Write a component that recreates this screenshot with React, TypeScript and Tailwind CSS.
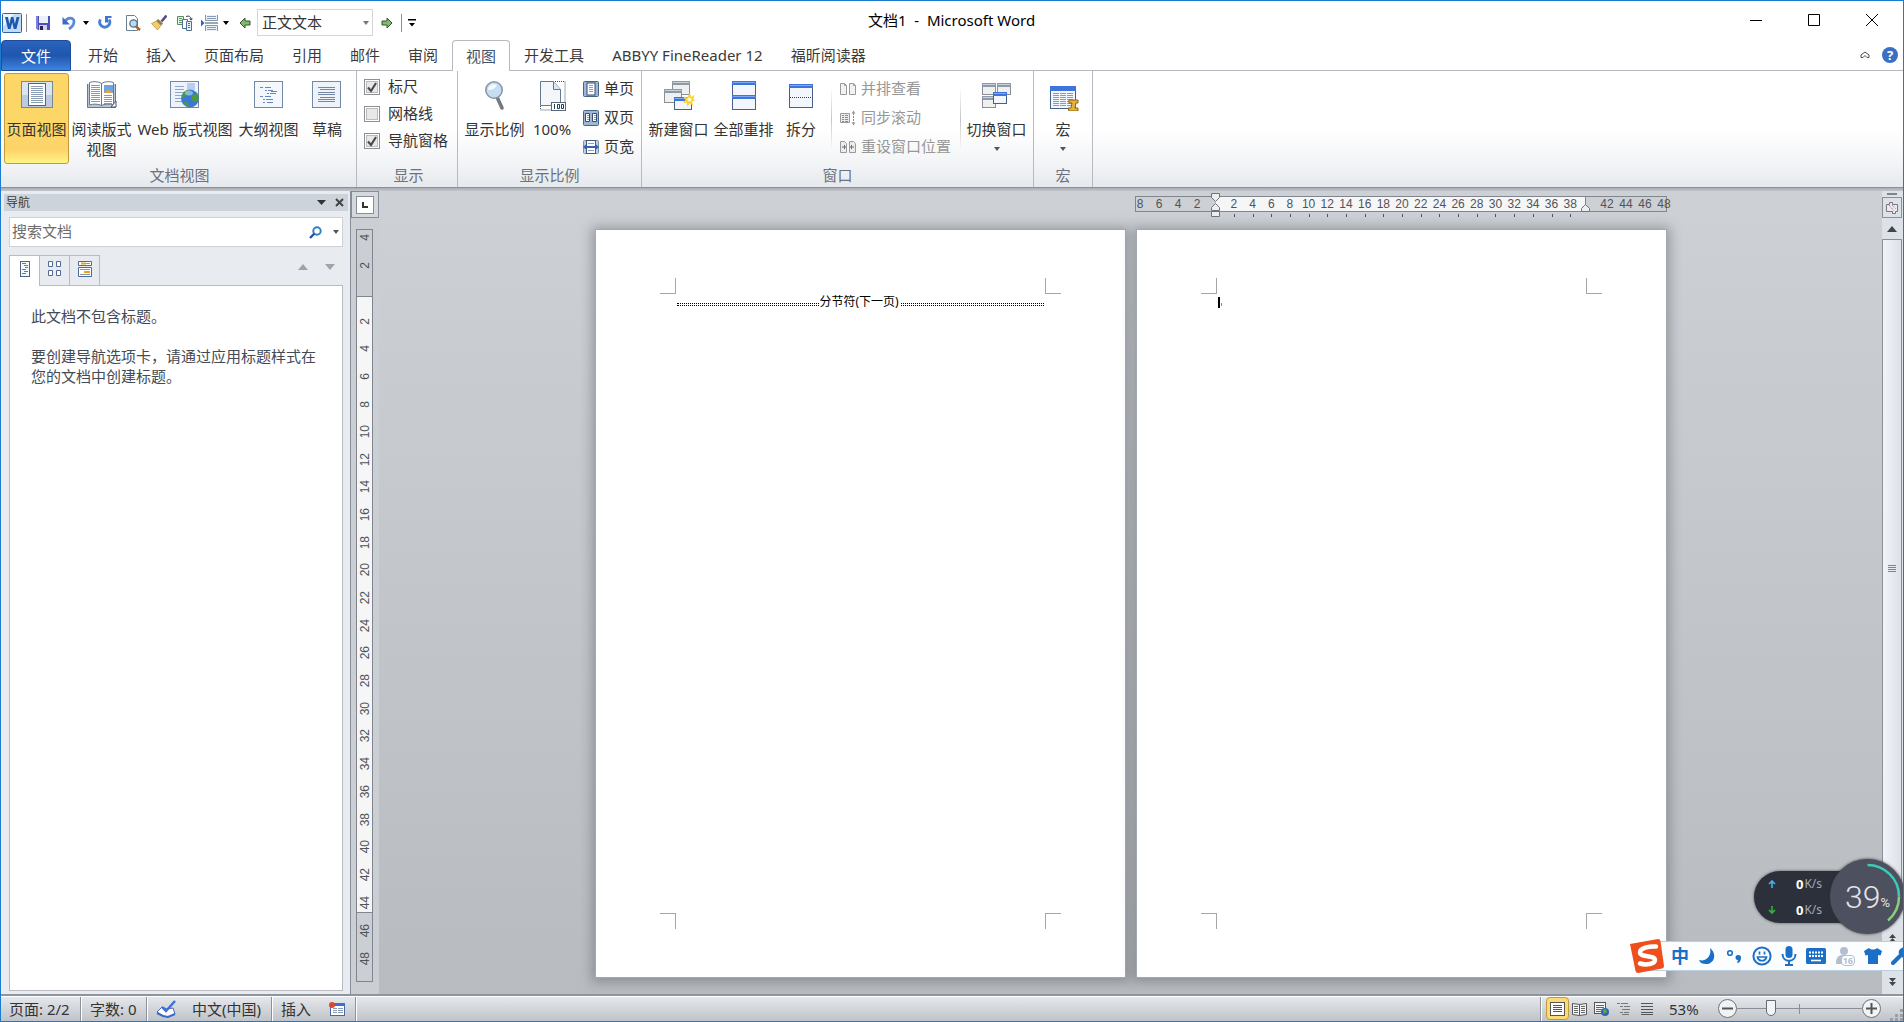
import React, { ReactNode } from "react";
import { clsx } from "clsx";

type IconProps = { className?: string };

const FONT = "font-['Noto_Sans','Noto_Sans_CJK_SC',sans-serif]";

/* ---------- small shared pieces ---------- */

function Caret({ className = "text-black" }: IconProps) {
  return (
    <svg viewBox="0 0 6 4" className={clsx("w-1.5 h-1 shrink-0", className)}>
      <path d="M0 0h6L3 4z" fill="currentColor" />
    </svg>
  );
}

function Lines({ x, y, w, n, gap = 3, color = "#8b9bb3" }: { x: number; y: number; w: number; n: number; gap?: number; color?: string }) {
  return (
    <>
      {Array.from({ length: n }, (_, i) => (
        <rect key={i} x={x} y={y + i * gap} width={w} height="1" fill={color} />
      ))}
    </>
  );
}

/** Small window with a coloured title strip. */
function MiniWindow({ x, y, w, h, blue = true }: { x: number; y: number; w: number; h: number; blue?: boolean }) {
  return (
    <g>
      <rect x={x + 0.5} y={y + 0.5} width={w - 1} height={h - 1} fill={blue ? "#f3f7fd" : "#f0f0f0"} stroke={blue ? "#466087" : "#8a8f96"} />
      <rect x={x} y={y} width={w} height="4" fill={blue ? "#3e74dc" : "#8f9aa8"} />
      <rect x={x + 1} y={y + 1} width={w - 2} height="1" fill={blue ? "#7fa9f5" : "#c8d0da"} />
    </g>
  );
}

/* ---------- quick access icons ---------- */

function WordLogo() {
  return (
    <svg viewBox="0 0 20 20" className="size-5 shrink-0">
      <rect x="0.5" y="0.5" width="19" height="19" rx="1" fill="#c3dcf6" stroke="#2a62a8" />
      <path d="M1 1h11L1 14z" fill="#fff" opacity=".7" />
      <path d="M3 4h3l1.4 7L9 4h2.4l1.5 7L14.600 4H17.500L14.400 16h-2.600L10.200 9.500 8.500 16H6z" fill="#1c59ae" />
    </svg>
  );
}

function SaveIcon() {
  return (
    <svg viewBox="0 0 16 16" className="size-4">
      <path d="M1 1h14v14H3l-2-2z" fill="#4d50b8" />
      <path d="M1 1h2v14l-2-2z" fill="#7d80dc" />
      <rect x="4" y="1" width="9" height="7" fill="#eaf1fb" />
      <rect x="4" y="10" width="8" height="5" fill="#cfd3e6" />
      <rect x="5" y="11" width="3" height="4" fill="#23264f" />
    </svg>
  );
}

function UndoIcon() {
  return (
    <svg viewBox="0 0 16 16" className="size-4">
      <path d="M4 7c2-5 9-5 9-.5 0 3-2 5.500-5 7.500" fill="none" stroke="#5b8ad8" strokeWidth="2.800" />
      <path d="M1.500 2v7.500H9z" fill="#3d6cc2" />
    </svg>
  );
}

function RedoIcon() {
  return (
    <svg viewBox="0 0 16 16" className="size-4">
      <path d="M3.500 4.500a5 5 0 1 0 8.500 0" fill="none" stroke="#4a7fd8" strokeWidth="2.800" />
      <path d="M8 1h6.500v2H11v4.500H8z" fill="#3f75d2" />
    </svg>
  );
}

function PreviewIcon() {
  return (
    <svg viewBox="0 0 16 16" className="size-4">
      <path d="M1.500 .5h8l3 3v12h-11z" fill="#fff" stroke="#6f7f92" />
      <circle cx="8.500" cy="8.500" r="3.700" fill="#b8d9f2" stroke="#55718f" strokeWidth="1.300" />
      <path d="M11 11.500l4 3.500" stroke="#a5652a" strokeWidth="2.400" />
    </svg>
  );
}

function BrushIcon() {
  return (
    <svg viewBox="0 0 16 16" className="size-4">
      <path d="M15.500 .5l-5 6" stroke="#5d4b83" strokeWidth="2.600" />
      <path d="M7 4l5 4.500-2 2L5 6z" fill="#8b7a52" />
      <path d="M5.500 6L10 10.500 6.500 15 .5 8.500z" fill="#f2cd69" stroke="#b88a2c" strokeWidth=".7" />
    </svg>
  );
}

function PagesSwapIcon() {
  return (
    <svg viewBox="0 0 16 16" className="size-4">
      <path d="M.5 1.500h6v8h-6z" fill="#e3f1df" stroke="#5d8a5d" />
      <Lines x={2} y={3} w={3} n={3} gap={2} color="#5d9a5d" />
      <path d="M5.500 4.500h5v9h-5z" fill="#fff" stroke="#4d7391" />
      <path d="M9.500 6.500h5v9h-5z" fill="#e7f0f9" stroke="#4d7391" />
      <Lines x={11} y={8} w={2} n={3} gap={2} color="#4d7391" />
      <path d="M9 1.500c3-1 5 0 5 3" fill="none" stroke="#2d4257" />
      <path d="M12 3.500h4l-2 2z" fill="#2d4257" />
    </svg>
  );
}

function BreakIcon() {
  return (
    <svg viewBox="0 0 18 16" className="w-[18px] h-4">
      <path d="M0 4.500v7L3.500 8z" fill="#2f64c8" />
      <path d="M4.500 0v5.500h12V0M4.500 16v-5.500h12V16" fill="#edf2f9" stroke="#8095ae" />
      <Lines x={6} y={1} w={9} n={2} gap={2} />
      <Lines x={6} y={12} w={9} n={2} gap={2} />
      <path d="M4 8h13" stroke="#3a4d66" />
    </svg>
  );
}

function GreenArrow({ flip = false }: { flip?: boolean }) {
  return (
    <svg viewBox="0 0 12 12" className={clsx("size-3 shrink-0", flip && "-scale-x-100")}>
      <path d="M1 6l5-5v3h5v4H6v3z" fill="#7fb972" stroke="#33562f" />
    </svg>
  );
}

/* ---------- ribbon icons ---------- */

function PageViewIcon() {
  return (
    <svg viewBox="0 0 32 32" className="size-8">
      <rect x="0.500" y="2.500" width="31" height="26" fill="#dbe5f2" stroke="#7c8796" />
      <rect x="1" y="16" width="30" height="12" fill="#bccbdf" />
      <rect x="7.500" y="4.500" width="17" height="22" fill="#fff" stroke="#52637e" />
      <Lines x={10} y={7} w={12} n={9} gap={2} />
    </svg>
  );
}

function ReadingIcon() {
  return (
    <svg viewBox="0 0 32 32" className="size-8">
      <path d="M1.500 5v23.500h28V5" fill="#b9c6d6" stroke="#66798f" />
      <path d="M3.500 3.500c4-1.500 9-1 12 1v22c-3-1.500-8-2-12-.5zM27.500 3.500c-4-1.500-9-1-12 1v22c3-1.500 8-2 12-.5z" fill="#fff" stroke="#66798f" />
      <Lines x={5} y={6} w={9} n={9} gap={2} color="#8c98aa" />
      <rect x="18" y="6" width="9" height="8" fill="#6aa3e8" />
      <path d="M18 14l4-4 5 4z" fill="#e8a13c" />
      <Lines x={18} y={16} w={8} n={5} gap={2} color="#8c98aa" />
      <path d="M30 22l-5 6h5z" fill="#fff" stroke="#44566d" />
    </svg>
  );
}

function WebIcon() {
  return (
    <svg viewBox="0 0 32 32" className="size-8">
      <rect x="1.500" y="2.500" width="28" height="26" fill="#eef3fb" stroke="#7389a8" />
      <Lines x={6} y={7} w={9} n={6} color="#8fa8d0" />
      <rect x="18" y="4" width="8" height="7" fill="#b8cdf0" />
      <circle cx="21" cy="19.500" r="9" fill="#3a78d4" />
      <path d="M13 16c2-4 5-5 8-5l-2 4-3 2-2 3zM22 17l6-3c2 3 2 6 1 8l-4 1-3-3zM14 22l5 2 1 4c-3 0-5-3-6-6z" fill="#4e9a3a" />
      <ellipse cx="20" cy="14" rx="4" ry="2.500" fill="#9fd0f5" opacity=".7" />
    </svg>
  );
}

function OutlineIcon() {
  return (
    <svg viewBox="0 0 32 32" className="size-8">
      <rect x="1.500" y="2.500" width="28" height="26" fill="#f4f7fc" stroke="#7389a8" />
      <path d="M7 8.500h3M12 8.500h6M12 11.500h2M15 11.500h5M14 14.500h2M17 14.500h6M7 17.500h3M12 17.500h6M10 20.500h2M13 20.500h7M10 23.500h2M14 23.500h6M18 12.500h6" stroke="#6288c0" />
    </svg>
  );
}

function DraftIcon() {
  return (
    <svg viewBox="0 0 32 32" className="size-8">
      <rect x="1.500" y="2.500" width="28" height="26" fill="#eef3fa" stroke="#7389a8" />
      <path d="M7 8.500h17M9 10.500h15M7 13.500h17M7 15.500h17M9 18.500h15M7 20.500h17M7 22.500h17" stroke="#7488a6" />
    </svg>
  );
}

function MagnifierIcon() {
  return (
    <svg viewBox="0 0 32 32" className="size-8">
      <path d="M18 18l5 11" stroke="#77797e" strokeWidth="3.600" strokeLinecap="round" />
      <circle cx="15" cy="11" r="8.200" fill="#c5def3" stroke="#8b97a6" strokeWidth="1.600" />
      <path d="M9 11c0-4 4-7 9-5-2 4-5 5-9 5z" fill="#f2f9ff" />
    </svg>
  );
}

function HundredIcon() {
  return (
    <svg viewBox="0 0 32 32" className="size-8">
      <path d="M4.500 2.500h13l7 8v16h-20z" fill="#f3f7fc" stroke="#64788f" />
      <path d="M17.500 2.500v8h7" fill="#dbe6f3" stroke="#64788f" />
      <path d="M19 2.500h10V30M4.500 27v4H16" fill="none" stroke="#3c4a5a" strokeDasharray="1 1" />
      <rect x="15.500" y="23.500" width="14" height="8" fill="#fff" stroke="#56697f" />
      <path d="M18.500 25v5M21.500 25.500h2v4h-2zM25.500 25.500h2v4h-2z" fill="none" stroke="#2c3a4a" />
    </svg>
  );
}

function NewWindowIcon() {
  return (
    <svg viewBox="0 0 32 32" className="size-8">
      <MiniWindow x={9} y={2} w={18} h={14} blue={false} />
      <MiniWindow x={1} y={10} w={18} h={14} blue={false} />
      <MiniWindow x={11} y={18} w={18} h={13} />
      <path d="M27 14l1.500 4 3-2-1 4 1.500 1.500-3 1 1 4-3.500-2-2 3-1-4-4 .5 3-3-2.500-3.500 4 1z" fill="#ffd22e" />
      <circle cx="26.500" cy="20.500" r="2" fill="#fffbd0" />
    </svg>
  );
}

function ArrangeIcon() {
  return (
    <svg viewBox="0 0 32 32" className="size-8">
      <MiniWindow x={4} y={2} w={24} h={15} />
      <MiniWindow x={4} y={16} w={24} h={15} />
    </svg>
  );
}

function SplitIcon() {
  return (
    <svg viewBox="0 0 32 32" className="size-8">
      <MiniWindow x={4} y={5} w={24} h={24} />
      <path d="M5 18.500h22" stroke="#2c3f5c" strokeDasharray="1 1" />
    </svg>
  );
}

function SwitchIcon() {
  return (
    <svg viewBox="0 0 32 32" className="size-8">
      <MiniWindow x={1} y={4} w={14} h={12} blue={false} />
      <MiniWindow x={16} y={4} w={14} h={12} blue={false} />
      <MiniWindow x={1} y={17} w={14} h={12} blue={false} />
      <MiniWindow x={12} y={13} w={14} h={12} />
    </svg>
  );
}

function MacroIcon() {
  return (
    <svg viewBox="0 0 32 32" className="size-8">
      <MiniWindow x={3} y={7} w={26} h={23} />
      <rect x="3" y="7" width="26" height="5" fill="#3e74dc" />
      {[6, 13, 20].map((x) => (
        <Lines key={x} x={x} y={14} w={6} n={7} gap={2} color="#7f9bc8" />
      ))}
      <path d="M22 21h9v3h-2l-1 5h3v3h-9l-1-3h3l1-5h-3z" fill="#e5b33c" stroke="#8d6414" />
    </svg>
  );
}

function OnePageIcon() {
  return (
    <svg viewBox="0 0 16 16" className="size-4">
      <rect x="0.500" y="0.500" width="15" height="15" rx="1" fill="#9fb7d6" stroke="#4a6388" />
      <rect x="4" y="2" width="8" height="12" fill="#fff" stroke="#354f74" />
      <Lines x={6} y={4} w={4} n={4} gap={2} />
    </svg>
  );
}

function TwoPageIcon() {
  return (
    <svg viewBox="0 0 16 16" className="size-4">
      <rect x="0.500" y="0.500" width="15" height="15" rx="1" fill="#9fb7d6" stroke="#4a6388" />
      <path d="M2.500 3.500h4v8h-4zM9.500 3.500h4v8h-4z" fill="#fff" stroke="#354f74" />
      <Lines x={4} y={5} w={2} n={3} gap={2} />
      <Lines x={11} y={5} w={2} n={3} gap={2} />
    </svg>
  );
}

function PageWidthIcon() {
  return (
    <svg viewBox="0 0 16 16" className="size-4">
      <rect x="0.500" y="1.500" width="15" height="13" rx="1" fill="#c3cfdf" stroke="#7f8fa6" />
      <rect x="3.500" y="1.500" width="9" height="13" fill="#fff" stroke="#46597a" />
      <path d="M0 8l3.500-3v2h9V5L16 8l-3.500 3V9h-9v2z" fill="#2f63b8" />
      <Lines x={5} y={4} w={6} n={1} />
      <Lines x={5} y={11} w={6} n={1} />
    </svg>
  );
}

function SideBySideIcon() {
  return (
    <svg viewBox="0 0 16 16" className="size-4">
      <path d="M.5 2.500h4l2 2v9h-6zM9.500 2.500h4l2 2v9h-6z" fill="#f2f2f2" stroke="#9a9a9a" />
      <path d="M4.500 2.500v2h2M13.500 2.500v2h2" fill="none" stroke="#9a9a9a" />
    </svg>
  );
}

function SyncScrollIcon() {
  return (
    <svg viewBox="0 0 16 16" className="size-4">
      <path d="M.5 3.500h9v9h-9z" fill="#ececec" stroke="#9a9a9a" />
      <Lines x={2} y={5} w={2} n={4} gap={2} color="#8a8a8a" />
      <Lines x={5} y={5} w={3} n={4} gap={2} color="#8a8a8a" />
      <path d="M13.500 3v10" stroke="#8a8a8a" strokeDasharray="2 1" />
      <path d="M11.500 3.500h4l-2-3zM11.500 12.500h4l-2 3z" fill="#9a9a9a" />
    </svg>
  );
}

function ResetIcon() {
  return (
    <svg viewBox="0 0 16 16" className="size-4">
      <path d="M.5 2.500h4l2 2v9h-6zM9.500 2.500h4l2 2v9h-6z" fill="#ececec" stroke="#9a9a9a" />
      <path d="M2 8h4M4.500 6v4M14 8h-4M11.500 6v4" stroke="#6f6f6f" />
    </svg>
  );
}

/* ---------- title bar and tabs ---------- */

function Divider({ className = "h-[18px]" }: IconProps) {
  return <span className={clsx("w-px bg-[#8d8d8d] shrink-0", className)} />;
}

function QatButton({ label, children, className = "" }: { label: string; children: ReactNode; className?: string }) {
  return (
    <button aria-label={label} className={clsx("flex items-center shrink-0", className)}>
      {children}
    </button>
  );
}

function TitleBar() {
  return (
    <header className="flex h-[39px] items-center bg-white">
      <div className="flex flex-1 items-center pl-px pt-1">
        <WordLogo />
        <Divider className="ml-1 h-[18px]" />
        <QatButton label="保存" className="ml-2">
          <SaveIcon />
        </QatButton>
        <QatButton label="撤消" className="ml-2.5 gap-1.5">
          <UndoIcon />
          <Caret />
        </QatButton>
        <QatButton label="恢复" className="ml-2">
          <RedoIcon />
        </QatButton>
        <QatButton label="打印预览" className="ml-3">
          <PreviewIcon />
        </QatButton>
        <QatButton label="格式刷" className="ml-2.5">
          <BrushIcon />
        </QatButton>
        <QatButton label="页面" className="ml-2.5">
          <PagesSwapIcon />
        </QatButton>
        <QatButton label="分隔符" className="ml-2 gap-1">
          <BreakIcon />
          <Caret />
        </QatButton>
        <QatButton label="后退" className="ml-2.5">
          <GreenArrow />
        </QatButton>
        <span className="relative ml-1.5">
          <select aria-label="样式" className="block h-[27px] w-[116px] appearance-none border border-[#d5d5d5] bg-white pl-1 text-[15px] text-[#333]">
            <option>正文文本</option>
          </select>
          <Caret className="pointer-events-none absolute right-1 top-3 text-[#777]" />
        </span>
        <QatButton label="前进" className="ml-2">
          <GreenArrow flip />
        </QatButton>
        <Divider className="ml-2 h-[18px]" />
        <QatButton label="自定义快速访问工具栏" className="ml-1.5">
          <svg viewBox="0 0 8 8" className="size-2">
            <path d="M0 0h8v1.500H0zM1 4h6L4 7.500z" fill="#000" />
          </svg>
        </QatButton>
      </div>
      <h1 className="pb-px text-[15px] leading-5 text-black">文档1&nbsp; -&nbsp; Microsoft Word</h1>
      <div className="flex flex-1 justify-end pr-0.5 pb-0.5">
        <WindowButton label="最小化" d="M0 6.500h12" />
        <WindowButton label="最大化" d="M.5 .5h11v11H.5z" />
        <WindowButton label="关闭" d="M0 0l12 12M12 0L0 12" />
      </div>
    </header>
  );
}

function WindowButton({ label, d }: { label: string; d: string }) {
  return (
    <button aria-label={label} className="flex h-9 w-[58px] items-center justify-center">
      <svg viewBox="0 0 12 12" className="size-3">
        <path d={d} fill="none" stroke="#000" />
      </svg>
    </button>
  );
}

const TABS_BEFORE = ["开始", "插入", "页面布局", "引用", "邮件", "审阅"];
const TABS_AFTER = ["开发工具", "ABBYY FineReader 12", "福昕阅读器"];

function Tab({ children, active = false }: { children: ReactNode; active?: boolean }) {
  return (
    <button
      role="tab"
      aria-selected={active}
      className={clsx(
        "h-[31px] text-[15px] leading-7 whitespace-nowrap",
        active
          ? "rounded-t-sm border border-b-0 border-[#b6b9c0] bg-white px-[13px] text-[#41546b]"
          : "border-b border-[#b6b9c0] px-3.5 text-[#3b3b3b]",
      )}
    >
      {children}
    </button>
  );
}

function TabRow() {
  return (
    <div role="tablist" className="flex bg-white">
      <button
        role="tab"
        className="h-[31px] w-[70px] rounded-t-sm border border-[#1d4c9c] bg-linear-to-b from-[#2a62bd] via-[#1f56ae] to-[#3f83dd] text-[15px] leading-7 text-white"
      >
        文件
      </button>
      <span className="w-[3px] border-b border-[#b6b9c0]" />
      {TABS_BEFORE.map((t) => (
        <Tab key={t}>{t}</Tab>
      ))}
      <Tab active>视图</Tab>
      {TABS_AFTER.map((t) => (
        <Tab key={t}>{t}</Tab>
      ))}
      <div className="flex flex-1 items-center justify-end gap-3 border-b border-[#b6b9c0] pr-[5px] pb-px">
        <button aria-label="功能区最小化">
          <svg viewBox="0 0 10 8" className="h-2 w-2.5">
            <path d="M1 6.500V4l4-3 4 3v2.500H7L5 4.500 3 6.500z" fill="#fff" stroke="#4c4c5a" />
          </svg>
        </button>
        <button aria-label="帮助" className="size-4 rounded-full bg-[#3a6fc4] text-[13px] leading-4 font-bold text-white">
          ?
        </button>
      </div>
    </div>
  );
}

/* ---------- ribbon ---------- */

function Group({ title, children, className = "" }: { title: string; children: ReactNode; className?: string }) {
  return (
    <section className={clsx("flex flex-col border-r border-[#b7bac1] pt-0.5", className)}>
      <div className="flex h-[92px]">{children}</div>
      <h2 className="text-center text-[15px] leading-5 text-[#6a7180]">{title}</h2>
    </section>
  );
}

type BigButtonProps = {
  icon: ReactNode;
  label: ReactNode;
  active?: boolean;
  menu?: boolean;
  className?: string;
};

function BigButton({ icon, label, active = false, menu = false, className = "w-[65px]" }: BigButtonProps) {
  return (
    <button
      className={clsx(
        "flex h-[91px] shrink-0 flex-col items-center rounded-[3px] border pt-[5px] text-[15px] leading-5 whitespace-nowrap text-[#333]",
        active ? "border-[#c39a39] bg-linear-to-b from-[#fcd667] from-60% via-[#fdd36a] via-85% to-[#fff486]" : "border-transparent",
        className,
      )}
    >
      {icon}
      <span className="mt-2">{label}</span>
      {menu && <Caret className="mt-2 text-[#555]" />}
    </button>
  );
}

function SmallButton({ icon, label, disabled = false }: { icon: ReactNode; label: string; disabled?: boolean }) {
  return (
    <button
      disabled={disabled}
      className={clsx(
        "flex h-[29px] items-center gap-[5px] text-[15px] whitespace-nowrap",
        disabled ? "text-[#979797]" : "text-[#333]",
      )}
    >
      {icon}
      {label}
    </button>
  );
}

function CheckRow({ label, checked = false }: { label: string; checked?: boolean }) {
  return (
    <label className="flex h-[27px] items-center gap-2 text-[15px] whitespace-nowrap text-[#333]">
      <span className="relative size-4">
        <input
          type="checkbox"
          defaultChecked={checked}
          className="peer block size-4 appearance-none border border-[#8e8f8f] bg-[#e8e8ea] shadow-[inset_0_0_0_1px_#fff,inset_0_0_0_2px_#b9bcc1]"
        />
        <svg viewBox="0 0 16 16" className="pointer-events-none absolute inset-0 hidden size-4 peer-checked:block">
          <path d="M4 8.500l3 3.500 5-8" fill="none" stroke="#4a4a4a" strokeWidth="2.200" />
        </svg>
      </span>
      {label}
    </label>
  );
}

function SoftDivider() {
  return <span className="mt-3.5 h-16 w-px bg-linear-to-b from-transparent via-[#c3c6cc] to-transparent" />;
}

function Ribbon() {
  return (
    <div className="flex h-[117px] border-b border-[#8d9097] bg-linear-to-b from-white from-50% via-[#f3f4f6] via-80% to-[#e6e9ed]">
      <Group title="文档视图" className="w-[356px] pr-px pl-[3px]">
        <BigButton active icon={<PageViewIcon />} label="页面视图" />
        <BigButton icon={<ReadingIcon />} label={<>阅读版式<br />视图</>} />
        <BigButton icon={<WebIcon />} label="Web 版式视图" className="w-[102px]" />
        <BigButton icon={<OutlineIcon />} label="大纲视图" />
        <BigButton icon={<DraftIcon />} label="草稿" className="w-[52px]" />
      </Group>
      <Group title="显示" className="w-[101px] pr-1 pl-[7px]">
        <div>
          <CheckRow label="标尺" checked />
          <CheckRow label="网格线" />
          <CheckRow label="导航窗格" checked />
        </div>
      </Group>
      <Group title="显示比例" className="w-[184px] pr-1 pl-1">
        <BigButton icon={<MagnifierIcon />} label="显示比例" />
        <BigButton icon={<HundredIcon />} label="100%" className="w-[50px]" />
        <div className="pt-px pl-1.5">
          <SmallButton icon={<OnePageIcon />} label="单页" />
          <SmallButton icon={<TwoPageIcon />} label="双页" />
          <SmallButton icon={<PageWidthIcon />} label="页宽" />
        </div>
      </Group>
      <Group title="窗口" className="w-[392px] pr-1 pl-1">
        <BigButton icon={<NewWindowIcon />} label="新建窗口" />
        <BigButton icon={<ArrangeIcon />} label="全部重排" />
        <BigButton icon={<SplitIcon />} label="拆分" className="w-[50px]" />
        <div className="flex pl-[5px]">
          <SoftDivider />
          <div className="w-[128px] pt-px pl-2">
            <SmallButton disabled icon={<SideBySideIcon />} label="并排查看" />
            <SmallButton disabled icon={<SyncScrollIcon />} label="同步滚动" />
            <SmallButton disabled icon={<ResetIcon />} label="重设窗口位置" />
          </div>
          <SoftDivider />
        </div>
        <BigButton menu icon={<SwitchIcon />} label="切换窗口" className="ml-[3px] w-[65px]" />
      </Group>
      <Group title="宏" className="w-[59px] items-center">
        <BigButton menu icon={<MacroIcon />} label="宏" className="w-[50px]" />
      </Group>
    </div>
  );
}

/* ---------- navigation pane ---------- */

function NavPane() {
  const tab = "flex h-[30px] w-[31px] -mr-px items-center justify-center border border-b-0 border-[#b8bcc2]";
  return (
    <aside className="flex w-[350px] shrink-0 flex-col border-r border-[#878d96] bg-[#e8ecf1] pt-[3px] pr-0.5 pl-[3px] pb-[3px]">
      <div className="flex h-[17px] items-center bg-[#cdd3db] pr-1 pl-0.5 text-[12px] leading-4 text-[#3b3b3b]">
        <h2 className="flex-1">导航</h2>
        <button aria-label="任务窗格选项">
          <svg viewBox="0 0 9 5" className="h-[5px] w-[9px]">
            <path d="M0 0h9L4.500 5z" fill="#333" />
          </svg>
        </button>
        <button aria-label="关闭" className="ml-[9px]">
          <svg viewBox="0 0 9 9" className="size-[9px]">
            <path d="M1 1l7 7M8 1L1 8" stroke="#444" strokeWidth="2" />
          </svg>
        </button>
      </div>
      <div className="mt-1.5 mr-[5px] ml-[5px] flex h-[30px] items-center border border-[#cdd2d6] bg-white pr-[3px]">
        <input
          type="text"
          aria-label="搜索文档"
          placeholder="搜索文档"
          className="min-w-0 flex-1 bg-transparent pb-0.5 pl-0.5 text-[15px] outline-none placeholder:text-[#6d6d6d]"
        />
        <button aria-label="搜索">
          <svg viewBox="0 0 13 13" className="size-[13px]">
            <circle cx="8" cy="5" r="3.700" fill="#fff" stroke="#2f80c8" strokeWidth="2" />
            <path d="M5.500 7.500L1 12" stroke="#2c4fa8" strokeWidth="2.400" />
          </svg>
        </button>
        <Caret className="ml-[11px] text-[#555]" />
      </div>
      <div className="mt-2 mr-[5px] ml-[5px] flex">
        <button aria-label="浏览标题" className={clsx(tab, "relative -mb-px h-[31px] bg-white pb-1")}>
          <svg viewBox="0 0 10 16" className="h-4 w-2.5">
            <rect x="0.500" y="0.500" width="9" height="15" fill="#f4f7fc" stroke="#50637f" />
            <path d="M2 2.500h4M4 4.500h4M5 6.500h3M2 8.500h4M4 10.500h4M2 12.500h4" stroke="#6b7a90" />
          </svg>
        </button>
        <button aria-label="浏览页面" className={clsx(tab, "pb-1")}>
          <svg viewBox="0 0 13 15" className="h-[15px] w-[13px]">
            <path d="M.5 .5h4v5h-4zM8.500 .5h4v5h-4zM.5 9.500h4v5h-4zM8.500 9.500h4v5h-4z" fill="#fff" stroke="#526a92" />
          </svg>
        </button>
        <button aria-label="浏览搜索结果" className={clsx(tab, "pb-1")}>
          <svg viewBox="0 0 14 16" className="h-4 w-3.5">
            <path d="M.5 .5h13v4H.5zM.5 6.500h13v9H.5z" fill="#fff" stroke="#526a92" />
            <path d="M3 2.500h5M6 11h6" stroke="#eaa21c" strokeWidth="2" />
            <path d="M8 2.500h4M2 8.500h10M2 13.500h10" stroke="#8293ad" />
          </svg>
        </button>
        <div className="flex flex-1 items-center justify-end gap-[17px] pr-2 pb-1.5">
          <svg viewBox="0 0 10 6" className="h-1.5 w-2.5">
            <path d="M0 6h10L5 0z" fill="#a0a3a8" />
          </svg>
          <svg viewBox="0 0 10 6" className="h-1.5 w-2.5">
            <path d="M0 0h10L5 6z" fill="#a0a3a8" />
          </svg>
        </div>
      </div>
      <div className="mr-[5px] ml-[5px] flex-1 border border-[#b8bcc2] bg-white pt-5 pr-5 pl-[21px] text-[15px] leading-5 text-[#444b55]">
        <p>此文档不包含标题。</p>
        <p className="mt-5">要创建导航选项卡，请通过应用标题样式在您的文档中创建标题。</p>
      </div>
    </aside>
  );
}

/* ---------- rulers ---------- */

const RULER_FONT = "font-['Liberation_Sans_Narrow','Liberation_Sans',sans-serif] text-[12px] leading-3 text-[#4f545a]";

const evens = (from: number, to: number) => Array.from({ length: (to - from) / 2 + 1 }, (_, i) => from + i * 2);

function VNumbers({ values, grow = false }: { values: number[]; grow?: boolean }) {
  return (
    <>
      {values.map((n) => (
        <span key={n} className={clsx("flex items-center justify-center", grow ? "min-h-0 flex-1" : "h-7 shrink-0")}>
          <span className="rotate-180 [writing-mode:vertical-rl]">{n}</span>
        </span>
      ))}
    </>
  );
}

function VerticalRuler() {
  return (
    <div className="flex w-7 shrink-0 flex-col bg-[#cbced3]">
      <button aria-label="左对齐式制表符" className="flex h-[27px] w-7 items-center justify-center border border-[#878d96] bg-[#d5d8dc]">
        <span className="flex size-[18px] items-center justify-center border border-[#878d96] bg-white">
          <svg viewBox="0 0 6 6" className="size-1.5">
            <path d="M1 0v5h5" fill="none" stroke="#333" strokeWidth="2" />
          </svg>
        </span>
      </button>
      <div className={clsx("mt-[11px] mb-3 ml-[5px] flex min-h-0 w-[17px] flex-1 flex-col border border-[#7f868f]", RULER_FONT)}>
        <div className="flex h-[66px] flex-col justify-end pb-[17px]">
          <VNumbers values={[4, 2]} />
        </div>
        <div className="flex min-h-0 flex-1 flex-col border-y border-[#7f868f] bg-[#f6f6f6]">
          <div className="-mb-1 flex min-h-0 flex-1 flex-col pt-2.5">
            <VNumbers values={evens(2, 44)} grow />
          </div>
        </div>
        <div className="flex h-[68px] flex-col pt-1">
          <VNumbers values={[46, 48]} />
        </div>
      </div>
    </div>
  );
}

function HorizontalRuler() {
  return (
    <div className={clsx("relative flex h-4 w-[532px] border border-[#7f868f] text-center", RULER_FONT)}>
      <div className="flex w-[80px] shrink-0 items-center justify-end pr-[9px]">
        {[8, 6, 4, 2].map((n) => (
          <span key={n} className="w-[19px] shrink-0">{n}</span>
        ))}
      </div>
      <div className="flex w-[370px] shrink-0 items-center border-r border-[#7f868f] bg-[#f6f6f6] pr-[5px] pl-[9px]">
        {evens(2, 38).map((n) => (
          <span key={n} className="relative min-w-0 flex-1">
            {n}
            <i className="absolute top-4 left-1/2 h-[3px] w-px bg-[#4f545a]" />
          </span>
        ))}
      </div>
      <div className="flex w-20 shrink-0 items-center pl-3">
        {evens(42, 48).map((n) => (
          <span key={n} className="w-[19px] shrink-0">{n}</span>
        ))}
      </div>
      <svg viewBox="0 0 9 24" className="absolute -top-1 left-[75px] h-6 w-[9px]">
        <path d="M.5 .5h8v4l-4 4-4-4z" fill="#eee" stroke="#6f757c" />
        <path d="M4.500 10.500l4 4v3h-8v-3zM.5 18.500h8v5h-8z" fill="#eee" stroke="#6f757c" />
      </svg>
      <svg viewBox="0 0 9 8" className="absolute top-[7px] left-[445px] h-2 w-[9px]">
        <path d="M4.500 .5l4 4v3h-8v-3z" fill="#eee" stroke="#6f757c" />
      </svg>
    </div>
  );
}

/* ---------- document ---------- */

function Page({ children }: { children: ReactNode }) {
  const mark = "size-4 border-[#a6a6a6]";
  return (
    <article className="flex w-[531px] flex-col border border-[#a3a9b0] bg-white px-16 pt-12 pb-12 shadow-[0_1px_11px_3px_rgba(70,75,82,0.4)]">
      <div className="flex justify-between">
        <span className={clsx(mark, "border-r border-b")} />
        <span className={clsx(mark, "border-b border-l")} />
      </div>
      <div className="flex-1 px-[17px]">{children}</div>
      <div className="flex justify-between">
        <span className={clsx(mark, "border-t border-r")} />
        <span className={clsx(mark, "border-t border-l")} />
      </div>
    </article>
  );
}

function DocumentArea() {
  return (
    <main className="flex min-w-0 flex-1 flex-col overflow-hidden bg-linear-to-b from-[#cdd0d5] to-[#b8bbbf]">
      <div className="flex h-[38px] items-start justify-center pt-[5px]">
        <div className="flex w-[1072px] justify-end">
          <HorizontalRuler />
        </div>
      </div>
      <div className="mb-4 flex flex-1 justify-center gap-2.5">
        <Page>
          <p className="flex h-4 items-center text-[12px] leading-4 text-black">
            <span className="mt-1 h-[3px] flex-1 border-y border-dotted border-black" />
            分节符(下一页)
            <span className="mt-1 ml-0.5 h-[3px] flex-1 border-y border-dotted border-black" />
          </p>
        </Page>
        <Page>
          <p className="flex h-3.5 items-end gap-px">
            <span className="h-[11px] w-0.5 bg-black" />
            <span className="mb-0.5 h-[3px] w-px bg-[#888]" />
          </p>
        </Page>
      </div>
    </main>
  );
}

function ScrollBar() {
  return (
    <div className="flex w-[21px] shrink-0 flex-col items-center bg-[#dde1e8] pr-px">
      <span className="mt-0.5 mb-0.5 h-0.5 w-2.5 shrink-0 bg-[#7e858d]" />
      <button aria-label="标尺" className="flex h-[21px] w-5 items-center justify-center border border-[#8a9097]">
        <svg viewBox="0 0 12 12" className="size-3">
          <path d="M.5 2.500h3v-2h3v2h5v7h-2v2h-3v-2h-6z" fill="#f0e9ee" stroke="#77777f" />
          <path d="M3 3l5 6M6 3l4 4" stroke="#77777f" strokeDasharray="1 1" />
        </svg>
      </button>
      <button aria-label="向上滚动" className="flex h-[21px] items-center">
        <svg viewBox="0 0 10 6" className="h-1.5 w-2.5">
          <path d="M0 6h10L5 0z" fill="#444" />
        </svg>
      </button>
      <div className="flex w-5 flex-1 flex-col items-center justify-center gap-px border border-[#8a9097] bg-linear-to-r from-[#f1f4f8] to-[#dde1e8]">
        {[0, 1, 2, 3].map((i) => (
          <span key={i} className="h-px w-2 bg-[#7e858d]" />
        ))}
      </div>
      <div className="flex h-[97px] flex-col items-center justify-end gap-[14px] pb-2">
        <svg viewBox="0 0 7 8" className="h-2 w-[7px]">
          <path d="M0 4h7L3.500 0zM0 8h7L3.500 4z" fill="#444" />
        </svg>
        <svg viewBox="0 0 7 8" className="h-2 w-[7px]">
          <circle cx="3.500" cy="4" r="3" fill="none" stroke="#444" />
        </svg>
        <svg viewBox="0 0 7 8" className="h-2 w-[7px]">
          <path d="M0 0h7L3.500 4zM0 4h7L3.500 8z" fill="#444" />
        </svg>
      </div>
    </div>
  );
}

/* ---------- status bar ---------- */

function StatusDivider() {
  return <span className="h-6 w-0.5 border-r border-l border-r-white border-l-[#8d9299]" />;
}

function StatusBar() {
  return (
    <footer className="flex h-[27px] shrink-0 items-center border-t-2 border-[#8f959f] bg-linear-to-b from-[#e6e9ee] to-[#c0c4c9] text-[15px] leading-5 whitespace-nowrap text-[#333] shadow-[inset_0_1px_0_#fff]">
      <button className="w-[79px] pl-2 text-left">页面: 2/2</button>
      <StatusDivider />
      <button className="w-16 pl-2 text-left">字数: 0</button>
      <StatusDivider />
      <button aria-label="校对" className="ml-2">
        <svg viewBox="0 0 20 18" className="h-[18px] w-5">
          <path d="M1 12l5-5 5 2 6-1 2 6-7 3-5-1z" fill="#fff" stroke="#4c66a8" />
          <path d="M1 13l6 3 5 1 7-3" fill="none" stroke="#3c6ac8" strokeWidth="2" />
          <path d="M6 7l4 4 9-10" fill="none" stroke="#3c6fd8" strokeWidth="2.400" />
        </svg>
      </button>
      <button className="w-[95px] pl-4 text-left">中文(中国)</button>
      <StatusDivider />
      <button className="ml-2">插入</button>
      <button aria-label="宏录制" className="mr-2.5 ml-[18px]">
        <svg viewBox="0 0 16 14" className="h-3.5 w-4">
          <rect x="1.500" y="1.500" width="14" height="12" fill="#fff" stroke="#466aa8" />
          <rect x="1" y="1" width="15" height="3" fill="#3e6fd0" />
          <Lines x={4} y={6} w={4} n={3} gap={2} />
          <Lines x={9} y={6} w={5} n={3} gap={2} />
          <circle cx="3" cy="3" r="3" fill="#d9482f" />
        </svg>
      </button>
      <StatusDivider />
      <div className="flex flex-1 items-center justify-end">
        <StatusDivider />
        <button aria-label="页面视图" className="ml-1 flex h-[23px] w-[23px] items-center justify-center rounded-sm border border-[#c09a3c] bg-[#fddb74]">
          <svg viewBox="0 0 15 14" className="h-3.5 w-[15px]">
            <rect x="0.500" y="0.500" width="14" height="13" fill="#fff" stroke="#555" />
            <Lines x={3} y={3} w={9} n={4} gap={2} color="#555" />
          </svg>
        </button>
        <button aria-label="阅读版式视图" className="ml-[3px]">
          <svg viewBox="0 0 15 14" className="h-3.5 w-[15px]">
            <path d="M.5 1.500l7 1 7-1v11l-7 1-7-1zM7.500 2.500v11" fill="#f4f4f4" stroke="#555" />
            <Lines x={2} y={4} w={4} n={4} gap={2} color="#666" />
            <Lines x={9} y={4} w={4} n={4} gap={2} color="#666" />
          </svg>
        </button>
        <button aria-label="Web 版式视图" className="ml-[7px]">
          <svg viewBox="0 0 15 14" className="h-3.5 w-[15px]">
            <rect x="0.500" y="0.500" width="11" height="11" fill="#f4f4f4" stroke="#555" />
            <Lines x={2} y={3} w={8} n={4} gap={2} color="#666" />
            <circle cx="11" cy="10" r="4" fill="#2f66b0" />
            <path d="M9 8l3-1 1 3-3 2z" fill="#58a846" />
          </svg>
        </button>
        <button aria-label="大纲视图" className="ml-2">
          <svg viewBox="0 0 14 12" className="h-3 w-3.5">
            <path d="M0 .5h3M4 .5h7M3 3.500h3M7 3.500h6M5 6.500h8M3 9.500h3M7 9.500h5M5 11.500h7" stroke="#777" />
          </svg>
        </button>
        <button aria-label="草稿" className="ml-2.5">
          <svg viewBox="0 0 12 12" className="size-3">
            <Lines x={0} y={0} w={12} n={4} gap={3} color="#555" />
            <rect y="11" width="12" height="1" fill="#555" />
          </svg>
        </button>
        <button className="ml-4 w-[31px] text-left">53%</button>
        <ZoomButton label="缩小" d="M4 9.500h11" className="ml-[18px]" />
        <div className="relative flex w-[125px] items-center">
          <i className="absolute left-[62px] h-2.5 w-px bg-[#8a8f96]" />
          <input
            type="range"
            aria-label="显示比例"
            min={0}
            max={100}
            defaultValue={25}
            className="relative h-4 w-full appearance-none bg-transparent [&::-webkit-slider-runnable-track]:h-px [&::-webkit-slider-runnable-track]:bg-[#8a8f96] [&::-webkit-slider-thumb]:-mt-2 [&::-webkit-slider-thumb]:h-4 [&::-webkit-slider-thumb]:w-2.5 [&::-webkit-slider-thumb]:appearance-none [&::-webkit-slider-thumb]:rounded-b-full [&::-webkit-slider-thumb]:border [&::-webkit-slider-thumb]:border-[#666b72] [&::-webkit-slider-thumb]:bg-[#f2f4f6]"
          />
        </div>
        <ZoomButton label="放大" d="M4 9.500h11M9.500 4v11" />
        <svg viewBox="0 0 14 14" className="ml-2 h-3.5 w-3.5 self-end">
          <path d="M11 2h3v3h-3zM11 7h3v3h-3zM6 7h3v3H6zM11 11h3v3h-3zM6 11h3v3H6zM1 11h3v3H1z" fill="#9a9fa6" />
        </svg>
      </div>
    </footer>
  );
}

function ZoomButton({ label, d, className = "" }: { label: string; d: string; className?: string }) {
  return (
    <button aria-label={label} className={className}>
      <svg viewBox="0 0 19 19" className="size-[19px]">
        <circle cx="9.500" cy="9.500" r="9" fill="#f1f3f5" stroke="#70757c" />
        <path d={d} stroke="#555" strokeWidth="2" />
      </svg>
    </button>
  );
}

/* ---------- floating desktop widgets ---------- */

function SpeedRow({ up = false }: { up?: boolean }) {
  return (
    <div className="flex h-[26px] items-center leading-5">
      <svg viewBox="0 0 8 8" className={clsx("size-2", up ? "text-[#45b3ea]" : "rotate-180 text-[#35b23c]")}>
        <path d="M4 8V1M1 4l3-3 3 3" fill="none" stroke="currentColor" strokeWidth="1.600" />
      </svg>
      <span className="ml-5 text-[13px] font-bold text-white">0</span>
      <span className="ml-px text-[12px] text-[#a6a9b0]">K/s</span>
    </div>
  );
}

function NetMeter() {
  return (
    <div className="absolute -right-0.5 bottom-[87px] flex items-center">
      <div className="-mr-4 w-[92px] rounded-l-full bg-[#2c303b] pl-3.5 shadow-[0_0_3px_#555]">
        <SpeedRow up />
        <SpeedRow />
      </div>
      <div className="relative flex size-[75px] items-center justify-center rounded-full bg-[#4c505f] text-[#e3e4e8] shadow-[0_0_3px_#333]">
        <svg viewBox="0 0 75 75" className="absolute inset-0">
          <path d="M37.500 6a31.500 31.500 0 0 1 31.500 31.500" fill="none" stroke="#3fc9b8" strokeWidth="2.500" />
          <path d="M69 37.500a31.500 31.500 0 0 1-11 24" fill="none" stroke="#86cf7c" strokeWidth="2.500" />
        </svg>
        <span className="font-[Roboto,sans-serif] text-[32px] font-light">39</span>
        <span className="mt-3 font-[Roboto,sans-serif] text-[13px]">%</span>
      </div>
    </div>
  );
}

function ImeBar() {
  return (
    <div className="absolute right-0 bottom-12 flex h-[34px] items-center text-[#1c6fc6]">
      <svg viewBox="0 0 36 36" className="relative z-10 -mr-4 size-9 shrink-0">
        <path d="M1 6L29 1q2 0 2.500 2L35 28q0 2-2 2.500L9 35q-2 0-2.500-2z" fill="#ee4f1c" />
        <path d="M27 8.500C20 8 11 10 11 14.500c0 5 15 2.500 15 7.500 0 4-9 5.500-15 3.500" fill="none" stroke="#fff" strokeWidth="4.500" strokeLinecap="round" />
      </svg>
      <div className="flex h-[30px] w-[254px] items-center gap-[9px] border-y border-[#b9cfe2] bg-[#fbfdff] pl-[22px]">
        <span className="text-[18px] leading-5 font-bold">中</span>
        <svg viewBox="0 0 18 18" className="size-[18px] shrink-0">
          <path d="M12 1c7 5 5 16-4 16-3 0-6-1-7-4 7 2 13-4 11-12z" fill="currentColor" />
        </svg>
        <svg viewBox="0 0 18 18" className="size-[18px] shrink-0">
          <circle cx="5" cy="6" r="2.300" fill="none" stroke="currentColor" strokeWidth="1.600" />
          <path d="M13 8a2.500 2.500 0 0 1 3 3c0 3-2 5-4 5l1-3a2.500 2.500 0 0 1 0-5z" fill="currentColor" />
        </svg>
        <svg viewBox="0 0 20 20" className="size-5 shrink-0">
          <circle cx="10" cy="10" r="8.600" fill="none" stroke="currentColor" strokeWidth="2" />
          <path d="M7.500 5.500v3M12.500 5.500v3M5.500 11c1 5 8 5 9 0z" fill="none" stroke="currentColor" strokeWidth="1.700" />
        </svg>
        <svg viewBox="0 0 16 20" className="h-5 w-4 shrink-0">
          <rect x="4.500" y="0" width="7" height="12" rx="3.500" fill="currentColor" />
          <path d="M1.500 8c0 9 13 9 13 0M8 15v4M4 19h8" fill="none" stroke="currentColor" strokeWidth="2" />
        </svg>
        <svg viewBox="0 0 20 16" className="h-4 w-5 shrink-0">
          <rect width="20" height="16" rx="1.500" fill="currentColor" />
          <path d="M3 4.500h14M3 8h14" stroke="#fff" strokeWidth="2" strokeDasharray="2 1" />
          <path d="M5 12.500h10" stroke="#fff" strokeWidth="1.600" />
        </svg>
        <span className="relative size-5 shrink-0 text-[#b5bdd0]">
          <svg viewBox="0 0 20 20" className="size-5">
            <circle cx="9" cy="5" r="4" fill="currentColor" />
            <path d="M1 18c0-8 3-9 8-9s8 1 8 9z" fill="currentColor" />
          </svg>
          <span className="absolute right-0 bottom-0 rounded-sm border border-[#b5bdd0] bg-white px-px text-[9px] leading-[9px] font-bold">16</span>
        </span>
        <svg viewBox="0 0 18 18" className="size-[18px] shrink-0">
          <path d="M5 1c2 2 6 2 8 0l5 3-1.500 4.500L14 8v9H4V8l-2.500.5L0 4z" fill="currentColor" />
        </svg>
        <svg viewBox="0 0 18 18" className="size-[18px] shrink-0">
          <path d="M2 16l7-7" stroke="currentColor" strokeWidth="4" strokeLinecap="round" />
          <path d="M15 1a5 5 0 1 0 2 7l-4 0-1-3z" fill="currentColor" />
        </svg>
      </div>
    </div>
  );
}

export default function App() {
  return (
    <div className={clsx("relative flex h-screen flex-col overflow-hidden border border-[#1b7ccf] bg-white", FONT)}>
      <TitleBar />
      <TabRow />
      <Ribbon />
      <div className="h-[3px] shrink-0 bg-linear-to-b from-[#a9adb3] to-[#c3c7cc]" />
      <div className="flex min-h-0 flex-1">
        <NavPane />
        <VerticalRuler />
        <DocumentArea />
        <ScrollBar />
      </div>
      <StatusBar />
      <NetMeter />
      <ImeBar />
    </div>
  );
}
